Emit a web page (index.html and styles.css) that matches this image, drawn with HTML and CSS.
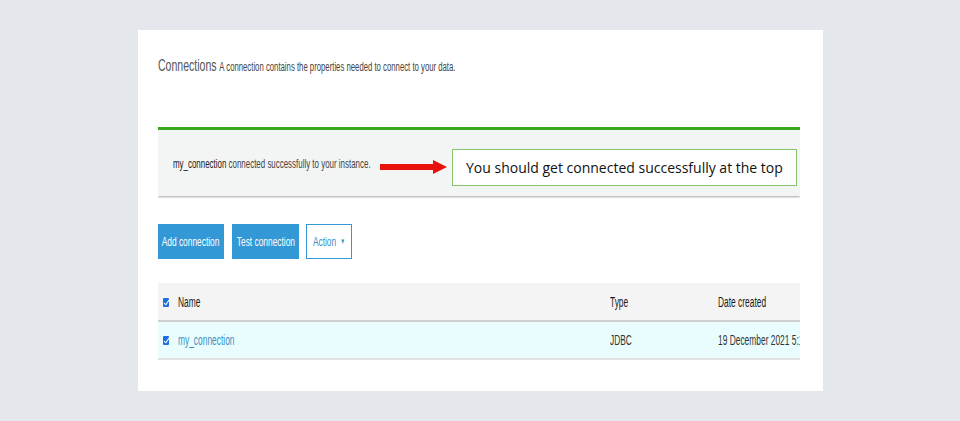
FILE: index.html
```html
<!DOCTYPE html>
<html>
<head>
    <title>Connections</title>
    <link rel="stylesheet" href="styles.css">
</head>
<body>
    <div class="card">
        <div class="pageHeader">
            <span class="narrow headLine"><span class="pageTitle">Connections</span> <span class="pageDesc">A connection contains the properties needed to connect to your data.</span></span>
        </div>
        <div class="content">
            <div class="notice">
                <div class="noticeText">
                    <span class="narrow"><b>my_connection</b> connected successfully to your instance.</span>
                </div>
                <svg class="arrow" width="67" height="14" viewBox="0 0 67 14">
                    <rect x="0" y="4" width="54" height="6" fill="#e8120c"/>
                    <polygon points="53,0 67,7 53,14" fill="#e8120c"/>
                </svg>
                <div class="callout">You should get connected successfully at the top</div>
            </div>
            <div class="toolbar">
                <button class="btnAzul btnAdd"><span class="narrow">Add connection</span></button>
                <button class="btnAzul btnTest"><span class="narrow">Test connection</span></button>
                <button class="btnBorde"><span class="narrow">Action <span class="caret">&#9660;</span></span></button>
            </div>
            <table class="grid">
                <thead>
                    <tr>
                        <th class="colName"><span class="check"></span><span class="narrow">Name</span></th>
                        <th class="colType"><span class="narrow">Type</span></th>
                        <th class="colDate"><span class="narrow">Date created</span></th>
                    </tr>
                </thead>
                <tbody>
                    <tr>
                        <td class="colName"><span class="check"></span><a href="#" class="narrow">my_connection</a></td>
                        <td class="colType"><span class="narrow">JDBC</span></td>
                        <td class="colDate"><span class="narrow">19 December 2021 5:18 PM</span></td>
                    </tr>
                </tbody>
            </table>
        </div>
    </div>
</body>
</html>
```

FILE: styles.css
```css
* {
    box-sizing: border-box;
}

body {
    margin: 0;
    padding: 30px 0 0 138px;
    background-color: #e4e8ec;
    font-family: "Liberation Sans", Arial, sans-serif;
}

/* the captured page is squeezed sideways */
.narrow {
    display: inline-block;
    white-space: nowrap;
    transform: scaleX(0.62);
    transform-origin: left center;
}

.card {
    width: 685px;
    height: 361px;
    background-color: white;
    padding: 26px 23px 0 20px;
}

.pageHeader {
    height: 71px;
    color: #555;
}

.pageTitle {
    font-size: 17px;
}

.pageDesc {
    font-size: 12.5px;
    color: #444;
}

.content {
    width: 642px;
    overflow: hidden;
}

.notice {
    display: flex;
    align-items: center;
    height: 69px;
    background-color: #f3f4f4;
    border-top: 3px solid #3aa81c;
    box-shadow: 0 1px 2px rgba(0, 0, 0, 0.35);
    padding-left: 15px;
}

.noticeText {
    flex: 0 0 207px;
    min-width: 0;
    font-size: 12.8px;
    color: #444;
    margin-top: 1px;
}

.noticeText b {
    font-weight: normal;
    color: #222;
}

.arrow {
    flex: 0 0 67px;
    margin-top: 7px;
}

.callout {
    flex: 0 0 345px;
    min-width: 0;
    margin-left: 5px;
    height: 37px;
    border: 1px solid #86c56e;
    background-color: white;
    font-family: "Open Sans", "Noto Sans", sans-serif;
    font-size: 14px;
    color: #111;
    display: flex;
    align-items: center;
    padding-left: 13px;
    margin-top: 8px;
    white-space: nowrap;
}

.toolbar {
    display: flex;
    gap: 8px;
    margin-top: 28px;
    height: 35px;
}

.toolbar button {
    display: flex;
    align-items: center;
    justify-content: center;
    font-family: inherit;
    font-size: 13.5px;
    padding: 0;
    cursor: pointer;
}

.toolbar .narrow {
    transform-origin: center;
}

.btnAzul {
    background-color: #3398d6;
    color: white;
    border: 1px solid #3398d6;
}

.btnAdd {
    width: 66px;
}

.btnTest {
    width: 67px;
}

.btnBorde {
    width: 46px;
    margin-left: -1px;
    background-color: white;
    color: #3a8fc8;
    border: 1px solid #3398d6;
}

.caret {
    font-size: 8px;
    margin-left: 3px;
    vertical-align: 2px;
}

.grid {
    width: 700px;
    table-layout: fixed;
    border-collapse: collapse;
    margin-top: 24px;
    font-size: 14px;
}

.grid th {
    background-color: #f4f4f4;
    font-weight: normal;
    color: #1a1a1a;
    text-align: left;
    height: 38px;
    padding: 0;
    border-bottom: 2px solid #d0d0d0;
}

.grid td {
    background-color: #e9fdfe;
    color: #333;
    height: 38px;
    padding: 0;
    border-bottom: 2px solid #e2e2e2;
}

.grid .narrow {
    transform: scaleX(0.6);
}

.colName {
    width: 452px;
    white-space: nowrap;
}

.grid .colName {
    padding-left: 5px;
}

.colType {
    width: 108px;
}

.colDate {
    width: 140px;
    white-space: nowrap;
}

.check {
    display: inline-block;
    width: 6px;
    height: 9px;
    background-color: #1d6fe0;
    border-radius: 1px;
    margin-right: 9px;
    vertical-align: 0;
    position: relative;
}

.check::after {
    content: "";
    position: absolute;
    left: 2px;
    top: 1px;
    width: 2px;
    height: 5px;
    border: solid white;
    border-width: 0 1px 1px 0;
    transform: rotate(35deg);
}

.grid a {
    color: #3a8fc8;
    text-decoration: none;
}
```
